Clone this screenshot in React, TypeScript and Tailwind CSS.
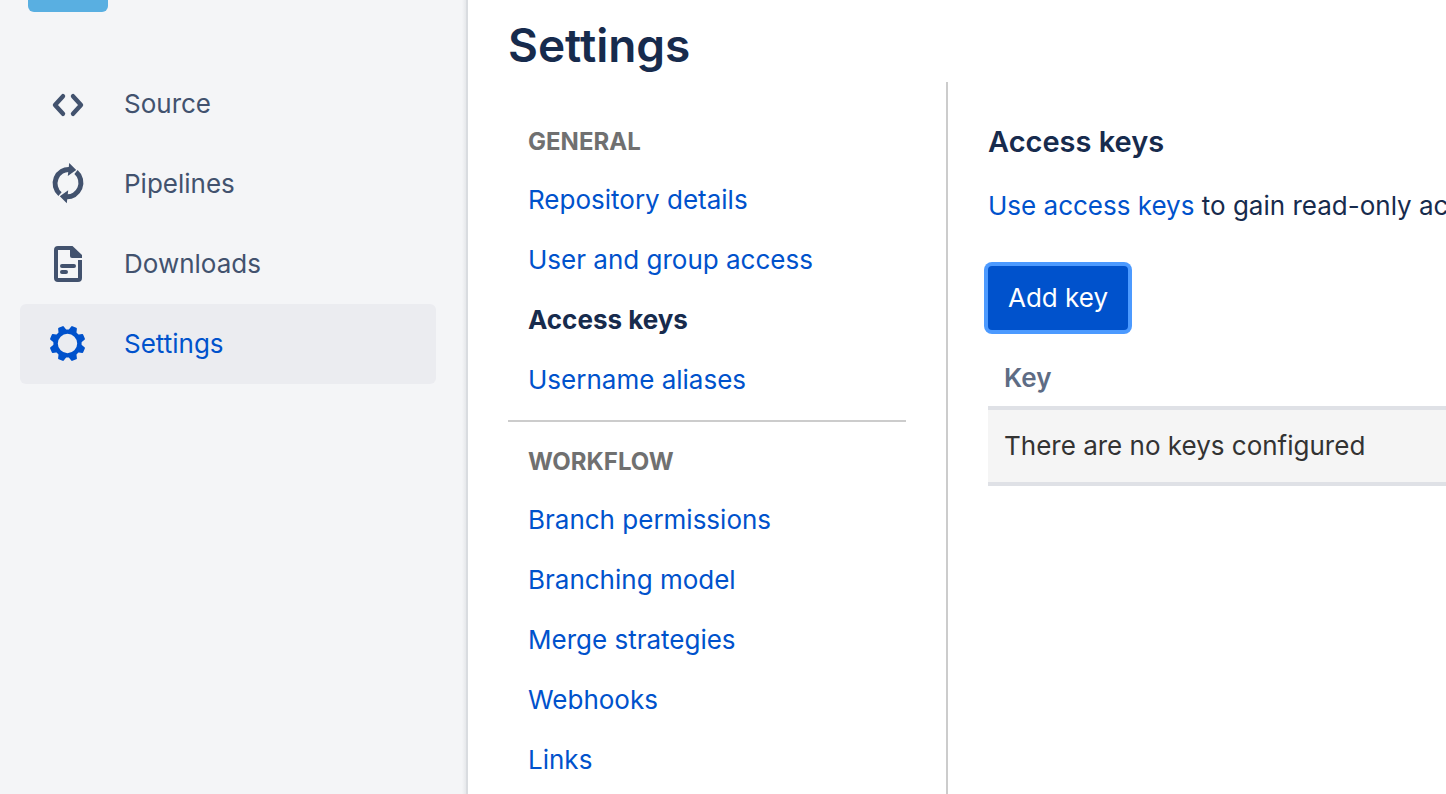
import type { ReactNode } from "react";

function SourceIcon() {
  return (
    <svg viewBox="0 0 48 48" className="size-12" fill="none" stroke="currentColor" strokeWidth="4.4" strokeLinecap="round" strokeLinejoin="round" aria-hidden="true">
      <path d="M19 16.200L11 25l8 8.800M29 16.200L37 25l-8 8.800" />
    </svg>
  );
}

function PipelinesIcon() {
  return (
    <svg viewBox="0 0 48 48" className="size-12" fill="none" stroke="currentColor" strokeWidth="5" aria-hidden="true">
      <path d="M16 34.200A13.600 14 0 0 1 26 9.500" />
      <path d="M32 12A13.600 14 0 0 1 22 36.700" />
      <path d="M25.200 3L32.200 10L23.800 16zM22.800 43.200L15.800 36.200L24.200 30.200z" fill="currentColor" stroke="none" />
    </svg>
  );
}

function DownloadsIcon() {
  return (
    <svg viewBox="0 0 48 48" className="size-12" fill="none" stroke="currentColor" strokeWidth="4" aria-hidden="true">
      <path d="M27 8H14a2 2 0 0 0-2 2v28a2 2 0 0 0 2 2h20a2 2 0 0 0 2-2V20" />
      <path d="M26 6h2.500L38 15v3H28a2 2 0 0 1-2-2z" fill="currentColor" stroke="none" />
      <path d="M18 26h12M18 32h4" strokeLinecap="round" />
    </svg>
  );
}

const toothAngles = [22.5, 67.5, 112.5, 157.5, 202.5, 247.5, 292.5, 337.5];

function SettingsIcon() {
  return (
    <svg viewBox="0 0 48 48" className="size-12" aria-hidden="true">
      <g transform="translate(23.500 23.500)" stroke="currentColor">
        <circle r="11.900" fill="none" strokeWidth="4.400" />
        {toothAngles.map((angle) => (
          <path key={angle} d="M-3.500-12L-2.100-16.900H2.100L3.500-12z" transform={`rotate(${angle})`} fill="currentColor" strokeWidth="2" strokeLinejoin="round" />
        ))}
      </g>
    </svg>
  );
}

function SidebarLink({ icon, label, active = false }: { icon: ReactNode; label: string; active?: boolean }) {
  return (
    <li>
      <a
        href="#"
        aria-current={active ? "page" : undefined}
        className={`flex h-20 items-center gap-8 rounded-md px-6 ${active ? "bg-[#ebecf0] text-[#0052cc]" : "text-[#42526e]"}`}
      >
        {icon}
        <span>{label}</span>
      </a>
    </li>
  );
}

type Section = { title: string; items: string[] };

const sections: Section[] = [
  { title: "General", items: ["Repository details", "User and group access", "Access keys", "Username aliases"] },
  { title: "Workflow", items: ["Branch permissions", "Branching model", "Merge strategies", "Webhooks", "Links"] },
];

function SettingsSection({ section }: { section: Section }) {
  return (
    <section className="border-t-2 border-[#ccc] pt-3 pb-2.5 first:border-transparent">
      <h2 className="flex h-14 items-center px-5 text-2xl font-bold uppercase text-[#707070]">{section.title}</h2>
      <ul>
        {section.items.map((item) => (
          <li key={item} className="flex h-15 items-center px-5">
            <a href="#" className={item === "Access keys" ? "font-bold text-[#172b4d]" : "text-[#0052cc]"}>
              {item}
            </a>
          </li>
        ))}
      </ul>
    </section>
  );
}

export default function App() {
  return (
    <div className="flex h-screen overflow-hidden bg-white font-['Inter','Liberation_Sans',sans-serif] text-[26px] leading-10 text-[#172b4d]">
      <aside className="flex w-[468px] shrink-0 bg-[#f4f5f7]">
        <div className="flex-1 pl-5">
          <div className="ml-2 h-3 w-20 rounded-b-md bg-[#59afe1]" />
          <nav aria-label="Repository" className="mr-[26px] pt-13">
            <ul>
              <SidebarLink icon={<SourceIcon />} label="Source" />
              <SidebarLink icon={<PipelinesIcon />} label="Pipelines" />
              <SidebarLink icon={<DownloadsIcon />} label="Downloads" />
              <SidebarLink icon={<SettingsIcon />} label="Settings" active />
            </ul>
          </nav>
        </div>
        <div className="w-1 bg-linear-to-r from-[#f4f5f7] to-[#e6e8eb]" />
        <div className="w-0.5 bg-[#d9dce0]" />
      </aside>
      <main className="flex min-w-0 flex-1 flex-col pl-10">
        <h1 className="flex h-[82px] shrink-0 items-center pt-2 text-[46px] font-semibold">Settings</h1>
        <div className="flex min-h-0 flex-1">
          <nav aria-label="Settings" className="flex w-[440px] shrink-0 flex-col border-r-2 border-[#ccc] pr-10 pt-[18px]">
            {sections.map((section) => (
              <SettingsSection key={section.title} section={section} />
            ))}
          </nav>
          <section className="min-w-0 flex-1 overflow-hidden pt-10 pl-10">
            <h2 className="text-[29px] leading-10 font-semibold">Access keys</h2>
            <p className="mt-6 whitespace-nowrap">
              <a href="#" className="text-[#0052cc]">Use access keys</a> to gain read-only access
            </p>
            <button type="button" className="mt-10 flex h-16 items-center rounded-sm bg-[#0052cc] px-5 text-white ring-4 ring-[#4c9aff]">
              Add key
            </button>
            <table className="mt-6 w-full border-collapse text-left">
              <thead>
                <tr>
                  <th className="px-4 pt-1 pb-2 font-semibold text-[#5e6c84]">Key</th>
                </tr>
              </thead>
              <tbody>
                <tr className="border-y-4 border-[#dfe1e6] bg-[#f5f5f5] text-[#333]">
                  <td className="h-[76px] px-4">There are no keys configured</td>
                </tr>
              </tbody>
            </table>
          </section>
        </div>
      </main>
    </div>
  );
}
